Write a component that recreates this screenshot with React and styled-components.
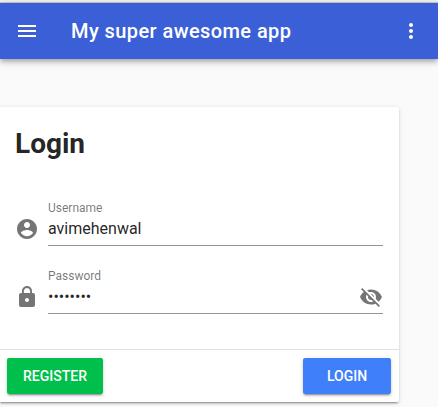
import React from 'react';
import styled, { createGlobalStyle } from 'styled-components';

const GlobalStyle = createGlobalStyle`
  *, *::before, *::after { box-sizing: border-box; }
  html, body { margin: 0; background: #fafafa; overflow: hidden; }
  body { font-family: Roboto, sans-serif; font-size: 16px; line-height: 1.5; color: rgba(0, 0, 0, 0.87); }
`;

const Page = styled.div`
  width: 438px;
  height: 407px;
  overflow: hidden;
  background: #fafafa;
`;

const WindowEdge = styled.div`
  height: 3px;
  background: #f2f1f0;
  border-bottom: 1px solid #cdc9c5;
`;

const Toolbar = styled.header`
  height: 56px;
  display: flex;
  align-items: center;
  padding: 0 15px;
  background: #3a5fd7;
  color: #fff;
  box-shadow: 0 2px 4px -1px rgba(0, 0, 0, 0.2), 0 4px 5px 0 rgba(0, 0, 0, 0.14), 0 1px 10px 0 rgba(0, 0, 0, 0.12);
`;

const ToolbarTitle = styled.div`
  flex: 1;
  margin-left: 32px;
  font-size: 20px;
  font-weight: 500;
  letter-spacing: 0.42px;
  white-space: nowrap;
`;

const IconButton = styled.button`
  display: flex;
  padding: 0;
  border: 0;
  background: transparent;
  color: inherit;
`;

const Icon = styled.svg`
  display: block;
  flex: none;
  width: 24px;
  height: 24px;
  fill: currentColor;
`;

const Card = styled.main`
  width: 400px;
  height: 295px;
  margin: 48px 0 0 -1px;
  display: flex;
  flex-direction: column;
  background: #fff;
  border-radius: 2px;
  box-shadow: 0 3px 1px -2px rgba(0, 0, 0, 0.2), 0 2px 2px 0 rgba(0, 0, 0, 0.14), 0 1px 5px 0 rgba(0, 0, 0, 0.12);
`;

const CardTitle = styled.h1`
  margin: 0;
  padding: 16px;
  font-size: 28px;
  font-weight: 700;
  line-height: 42px;
`;

const Form = styled.form`
  flex: 1;
  padding: 16px;
`;

const Field = styled.div`
  height: 68px;
  display: flex;
  align-items: flex-start;
  color: rgba(0, 0, 0, 0.54);
  & > svg { margin-top: 20px; }
`;

const FieldBody = styled.label`
  flex: 1;
  margin-left: 9px;
  height: 49px;
  display: grid;
  grid-template-columns: 1fr auto;
  grid-template-rows: 16px 32px;
  border-bottom: 1px solid #949494;
`;

const FieldLabel = styled.span`
  grid-column: 1 / -1;
  padding-top: 2px;
  font-size: 12px;
  line-height: 18px;
`;

const Input = styled.input`
  width: 100%;
  height: 30px;
  padding: 0;
  border: 0;
  outline: 0;
  background: transparent;
  color: rgba(0, 0, 0, 0.87);
  font: 400 16px/20px Roboto, sans-serif;
`;

const Actions = styled.footer`
  height: 53px;
  display: flex;
  align-items: center;
  justify-content: space-between;
  padding: 0 8px;
  border-top: 1px solid rgba(0, 0, 0, 0.12);
`;

const Button = styled.button`
  height: 36px;
  min-width: 88px;
  padding: 0 16px;
  border: 0;
  border-radius: 2px;
  background: ${({ $color }) => $color};
  color: #fff;
  font: 500 14px/1 Roboto, sans-serif;
  text-transform: uppercase;
  box-shadow: 0 3px 1px -2px rgba(0, 0, 0, 0.2), 0 2px 2px 0 rgba(0, 0, 0, 0.14), 0 1px 5px 0 rgba(0, 0, 0, 0.12);
`;

const paths = {
  menu: 'M3 18h18v-2H3v2zm0-5h18v-2H3v2zm0-7v2h18V6H3z',
  more: 'M12 8c1.1 0 2-.9 2-2s-.9-2-2-2-2 .9-2 2 .9 2 2 2zm0 2c-1.1 0-2 .9-2 2s.9 2 2 2 2-.9 2-2-.9-2-2-2zm0 6c-1.1 0-2 .9-2 2s.9 2 2 2 2-.9 2-2-.9-2-2-2z',
  account: 'M12 2C6.48 2 2 6.48 2 12s4.48 10 10 10 10-4.48 10-10S17.52 2 12 2zm0 3c1.66 0 3 1.34 3 3s-1.34 3-3 3-3-1.34-3-3 1.34-3 3-3zm0 14.2c-2.5 0-4.71-1.28-6-3.22.03-1.99 4-3.08 6-3.08 1.99 0 5.97 1.09 6 3.08-1.29 1.94-3.5 3.22-6 3.22z',
  lock: 'M18 8h-1V6c0-2.76-2.24-5-5-5S7 3.24 7 6v2H6c-1.1 0-2 .9-2 2v10c0 1.1.9 2 2 2h12c1.1 0 2-.9 2-2V10c0-1.1-.9-2-2-2zm-6 9c-1.1 0-2-.9-2-2s.9-2 2-2 2 .9 2 2-.9 2-2 2zm3.1-9H8.9V6c0-1.71 1.39-3.1 3.1-3.1 1.71 0 3.1 1.39 3.1 3.1v2z',
  hidden: 'M12 7c2.76 0 5 2.24 5 5 0 .65-.13 1.26-.36 1.83l2.92 2.92c1.51-1.26 2.7-2.89 3.43-4.75-1.73-4.39-6-7.5-11-7.5-1.4 0-2.74.25-3.98.7l2.16 2.16C10.74 7.13 11.35 7 12 7zM2 4.27l2.28 2.28.46.46C3.08 8.3 1.78 10.02 1 12c1.73 4.39 6 7.5 11 7.5 1.55 0 3.03-.3 4.38-.84l.42.42L19.73 22 21 20.73 3.27 3 2 4.27zM7.53 9.8l1.55 1.55c-.05.21-.08.43-.08.65 0 1.66 1.34 3 3 3 .22 0 .44-.03.65-.08l1.55 1.55c-.67.33-1.41.53-2.2.53-2.76 0-5-2.24-5-5 0-.79.2-1.53.53-2.2zm4.31-.78l3.15 3.15.02-.16c0-1.66-1.34-3-3-3l-.17.01z',
};

function Glyph({ name }) {
  return (
    <Icon viewBox="0 0 24 24" aria-hidden="true">
      <path d={paths[name]} />
    </Icon>
  );
}

function TextField({ icon, label, type, value, action }) {
  return (
    <Field>
      <Glyph name={icon} />
      <FieldBody>
        <FieldLabel>{label}</FieldLabel>
        <Input type={type} defaultValue={value} />
        {action}
      </FieldBody>
    </Field>
  );
}

const RevealButton = styled(IconButton)`
  align-items: center;
`;

export default function App() {
  return (
    <Page>
      <GlobalStyle />
      <WindowEdge />
      <Toolbar>
        <IconButton aria-label="Menu"><Glyph name="menu" /></IconButton>
        <ToolbarTitle>My super awesome app</ToolbarTitle>
        <IconButton aria-label="More"><Glyph name="more" /></IconButton>
      </Toolbar>
      <Card>
        <CardTitle>Login</CardTitle>
        <Form>
          <TextField icon="account" label="Username" type="text" value="avimehenwal" />
          <TextField
            icon="lock"
            label="Password"
            type="password"
            value="password"
            action={<RevealButton type="button" aria-label="Show password"><Glyph name="hidden" /></RevealButton>}
          />
        </Form>
        <Actions>
          <Button $color="#00c04b">Register</Button>
          <Button $color="#3f7ff9">Login</Button>
        </Actions>
      </Card>
    </Page>
  );
}
